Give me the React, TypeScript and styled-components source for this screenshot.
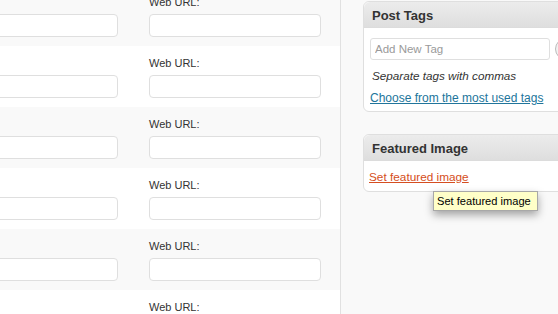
import React from "react";
import styled, { createGlobalStyle } from "styled-components";

const Global = createGlobalStyle`
  html, body {
    margin: 0;
    padding: 0;
    overflow: hidden;
    background: #f9f9f9;
    font-family: "Liberation Sans", Arial, sans-serif;
  }
`;

const Page = styled.div`
  display: flex;
  width: 558px;
  height: 314px;
  overflow: hidden;
`;

const LeftPane = styled.div`
  width: 340px;
  flex: none;
  overflow: hidden;
  background: #fff;
`;

const RowList = styled.div`
  margin: -15px 0 0 -54px;
  display: flex;
  flex-direction: column;
`;

const Row = styled.div<{ $alt?: boolean }>`
  display: grid;
  grid-template-columns: 172px 172px;
  column-gap: 31px;
  padding: 10px 0 9px;
  background: ${(p) => (p.$alt ? "#f9f9f9" : "#ffffff")};
`;

const Field = styled.div`
  display: flex;
  flex-direction: column;
`;

const Label = styled.label`
  font-size: 11px;
  line-height: 14px;
  color: #333;
  margin-bottom: 5px;
  white-space: nowrap;
`;

const TextInput = styled.input`
  height: 23px;
  box-sizing: border-box;
  border: 1px solid #dfdfdf;
  border-radius: 4px;
  background: #fff;
  margin: 0;
  padding: 0 4px;
  outline: none;
`;

const RightPane = styled.div`
  flex: 1;
  min-width: 0;
  overflow: hidden;
  border-left: 1px solid #e1e1e1;
  background: #f9f9f9;
  padding: 1px 0 0 22px;
  display: flex;
  flex-direction: column;
  gap: 22px;
`;

const PostBox = styled.div`
  position: relative;
  width: 300px;
  flex: none;
  border: 1px solid #dfdfdf;
  border-radius: 6px;
  background: #fff;
`;

const BoxHeader = styled.h3`
  margin: 0;
  height: 26px;
  box-sizing: border-box;
  padding: 2px 8px 0;
  line-height: 23px;
  font-size: 13px;
  font-weight: bold;
  color: #333;
  background: linear-gradient(#ececec, #dedede);
  border-bottom: 1px solid #dcdcdc;
  border-radius: 6px 6px 0 0;
`;

const BoxBody = styled.div<{ $pad: string }>`
  padding: ${(p) => p.$pad};
`;

const TagRow = styled.div`
  display: flex;
  align-items: center;
  gap: 5px;
`;

const TagInput = styled.input`
  width: 180px;
  height: 22px;
  box-sizing: border-box;
  border: 1px solid #dfdfdf;
  border-radius: 3px;
  margin: 0;
  padding: 0 4px;
  font-family: "Liberation Sans", Arial, sans-serif;
  font-size: 11.5px;
  color: #333;
  outline: none;
  &::placeholder {
    color: #9a9a9a;
  }
`;

const AddButton = styled.button`
  height: 22px;
  box-sizing: border-box;
  border: 1px solid #bbb;
  border-radius: 11px;
  background: #f2f2f2;
  font-family: "Liberation Sans", Arial, sans-serif;
  font-size: 11px;
  color: #464646;
  padding: 0 8px;
  flex: none;
`;

const HowTo = styled.p`
  margin: 8px 0 0 2px;
  font-size: 11.7px;
  line-height: 16px;
  font-style: italic;
  color: #333;
`;

const TagCloudLink = styled.a`
  display: inline-block;
  margin-top: 6px;
  font-size: 12px;
  line-height: 16px;
  color: #21759b;
  text-decoration: underline;
`;

const FeaturedLink = styled.a`
  display: inline-block;
  font-size: 11.8px;
  line-height: 16px;
  color: #d54e21;
  text-decoration: underline;
`;

const Tooltip = styled.div`
  position: absolute;
  left: 69px;
  top: 56px;
  box-sizing: border-box;
  width: 105px;
  height: 20px;
  padding: 0 0 0 3px;
  line-height: 18px;
  font-size: 11.1px;
  color: #000;
  background: #ffffc8;
  border: 1px solid #a8a8a8;
  box-shadow: 0 4px 8px rgba(0, 0, 0, 0.35);
  white-space: nowrap;
`;

const rows = [true, false, true, false, true, false];

export default function App() {
  return (
    <>
      <Global />
      <Page>
        <LeftPane>
          <RowList>
            {rows.map((alt, i) => (
              <Row key={i} $alt={alt}>
                <Field>
                  <Label>Link name:</Label>
                  <TextInput type="text" />
                </Field>
                <Field>
                  <Label>Web URL:</Label>
                  <TextInput type="text" />
                </Field>
              </Row>
            ))}
          </RowList>
        </LeftPane>
        <RightPane>
          <PostBox>
            <BoxHeader>Post Tags</BoxHeader>
            <BoxBody $pad="10px 6px 5px">
              <TagRow>
                <TagInput type="text" placeholder="Add New Tag" />
                <AddButton>Add</AddButton>
              </TagRow>
              <HowTo>Separate tags with commas</HowTo>
              <TagCloudLink href="#">Choose from the most used tags</TagCloudLink>
            </BoxBody>
          </PostBox>
          <PostBox>
            <BoxHeader>Featured Image</BoxHeader>
            <BoxBody $pad="6px 5px 6px">
              <FeaturedLink href="#">Set featured image</FeaturedLink>
            </BoxBody>
            <Tooltip>Set featured image</Tooltip>
          </PostBox>
        </RightPane>
      </Page>
    </>
  );
}
